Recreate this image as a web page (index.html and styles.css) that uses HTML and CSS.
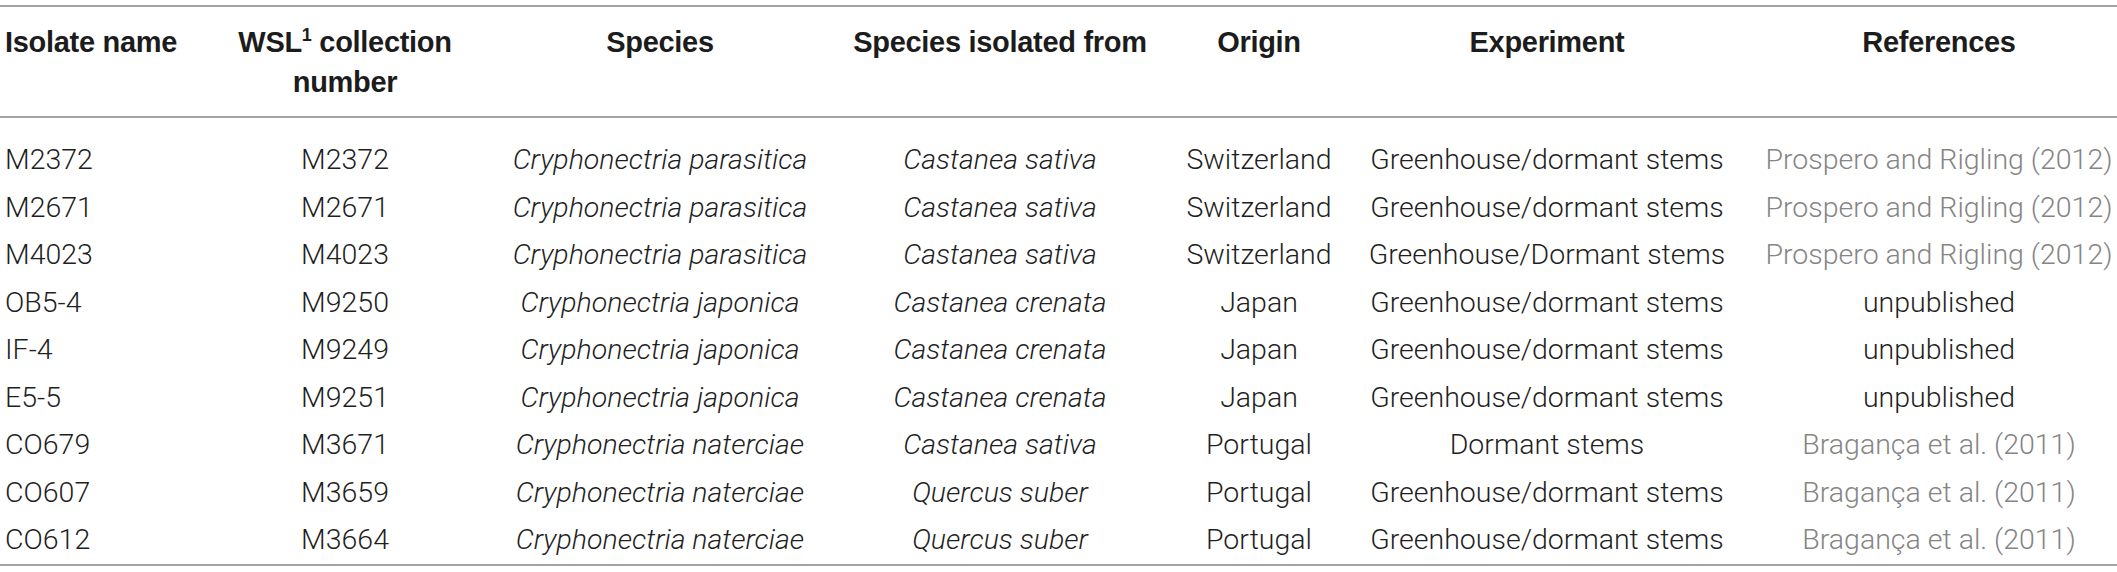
FILE: index.html
```html
<!DOCTYPE html>
<html lang="en">
<head>
<meta charset="utf-8">
<title>Isolates table</title>
<link rel="stylesheet" href="styles.css">
</head>
<body>
<div class="wrap">
<table class="tbl">
  <colgroup>
    <col class="c1">
    <col class="c2">
    <col class="c3">
    <col class="c4">
    <col class="c5">
    <col class="c6">
    <col class="c7">
  </colgroup>
  <thead>
    <tr>
      <th class="left">Isolate name</th>
      <th>WSL<sup>1</sup> collection<br>number</th>
      <th>Species</th>
      <th>Species isolated from</th>
      <th>Origin</th>
      <th>Experiment</th>
      <th>References</th>
    </tr>
  </thead>
  <tbody>
    <tr><td class="left">M2372</td><td>M2372</td><td class="it">Cryphonectria parasitica</td><td class="it">Castanea sativa</td><td>Switzerland</td><td>Greenhouse/dormant stems</td><td class="ref">Prospero and Rigling (2012)</td></tr>
    <tr><td class="left">M2671</td><td>M2671</td><td class="it">Cryphonectria parasitica</td><td class="it">Castanea sativa</td><td>Switzerland</td><td>Greenhouse/dormant stems</td><td class="ref">Prospero and Rigling (2012)</td></tr>
    <tr><td class="left">M4023</td><td>M4023</td><td class="it">Cryphonectria parasitica</td><td class="it">Castanea sativa</td><td>Switzerland</td><td>Greenhouse/Dormant stems</td><td class="ref">Prospero and Rigling (2012)</td></tr>
    <tr><td class="left">OB5-4</td><td>M9250</td><td class="it">Cryphonectria japonica</td><td class="it">Castanea crenata</td><td>Japan</td><td>Greenhouse/dormant stems</td><td>unpublished</td></tr>
    <tr><td class="left">IF-4</td><td>M9249</td><td class="it">Cryphonectria japonica</td><td class="it">Castanea crenata</td><td>Japan</td><td>Greenhouse/dormant stems</td><td>unpublished</td></tr>
    <tr><td class="left">E5-5</td><td>M9251</td><td class="it">Cryphonectria japonica</td><td class="it">Castanea crenata</td><td>Japan</td><td>Greenhouse/dormant stems</td><td>unpublished</td></tr>
    <tr><td class="left">CO679</td><td>M3671</td><td class="it">Cryphonectria naterciae</td><td class="it">Castanea sativa</td><td>Portugal</td><td>Dormant stems</td><td class="ref">Bragança et al. (2011)</td></tr>
    <tr><td class="left">CO607</td><td>M3659</td><td class="it">Cryphonectria naterciae</td><td class="it">Quercus suber</td><td>Portugal</td><td>Greenhouse/dormant stems</td><td class="ref">Bragança et al. (2011)</td></tr>
    <tr><td class="left">CO612</td><td>M3664</td><td class="it">Cryphonectria naterciae</td><td class="it">Quercus suber</td><td>Portugal</td><td>Greenhouse/dormant stems</td><td class="ref">Bragança et al. (2011)</td></tr>
  </tbody>
</table>
</div>
</body>
</html>
```
FILE: styles.css
```css
html, body {
  margin: 0;
  padding: 0;
  background: #ffffff;
}

.wrap {
  padding: 5px 0 0 0;
}

.tbl {
  width: 2117px;
  table-layout: fixed;
  border-collapse: collapse;
  font-family: Roboto, "Liberation Sans", Arial, sans-serif;
  color: #1f1f1f;
  border-top: 2px solid #a3a3a3;
  border-bottom: 2px solid #a3a3a3;
}

.c1 { width: 185px; }
.c2 { width: 320px; }
.c3 { width: 310px; }
.c4 { width: 370px; }
.c5 { width: 148px; }
.c6 { width: 428px; }
.c7 { width: 356px; }

.tbl th {
  font-family: "Liberation Sans", Arial, sans-serif;
  font-weight: bold;
  font-size: 29px;
  letter-spacing: -0.3px;
  line-height: 40px;
  padding: 15px 0 14px 0;
  text-align: center;
  vertical-align: top;
  color: #1c1c1c;
  white-space: nowrap;
}

.tbl thead tr {
  border-bottom: 2px solid #a3a3a3;
}

.tbl th sup {
  font-size: 18px;
  line-height: 0;
  vertical-align: 11px;
}

.tbl td {
  font-size: 28.5px;
  font-weight: 300;
  line-height: 47.5px;
  padding: 0;
  text-align: center;
  white-space: nowrap;
}

.tbl tbody tr:first-child td {
  padding-top: 18px;
}

.tbl .left {
  text-align: left;
  padding-left: 5px;
}

.tbl .it {
  font-style: italic;
}

.tbl .ref {
  color: #858585;
}
```
